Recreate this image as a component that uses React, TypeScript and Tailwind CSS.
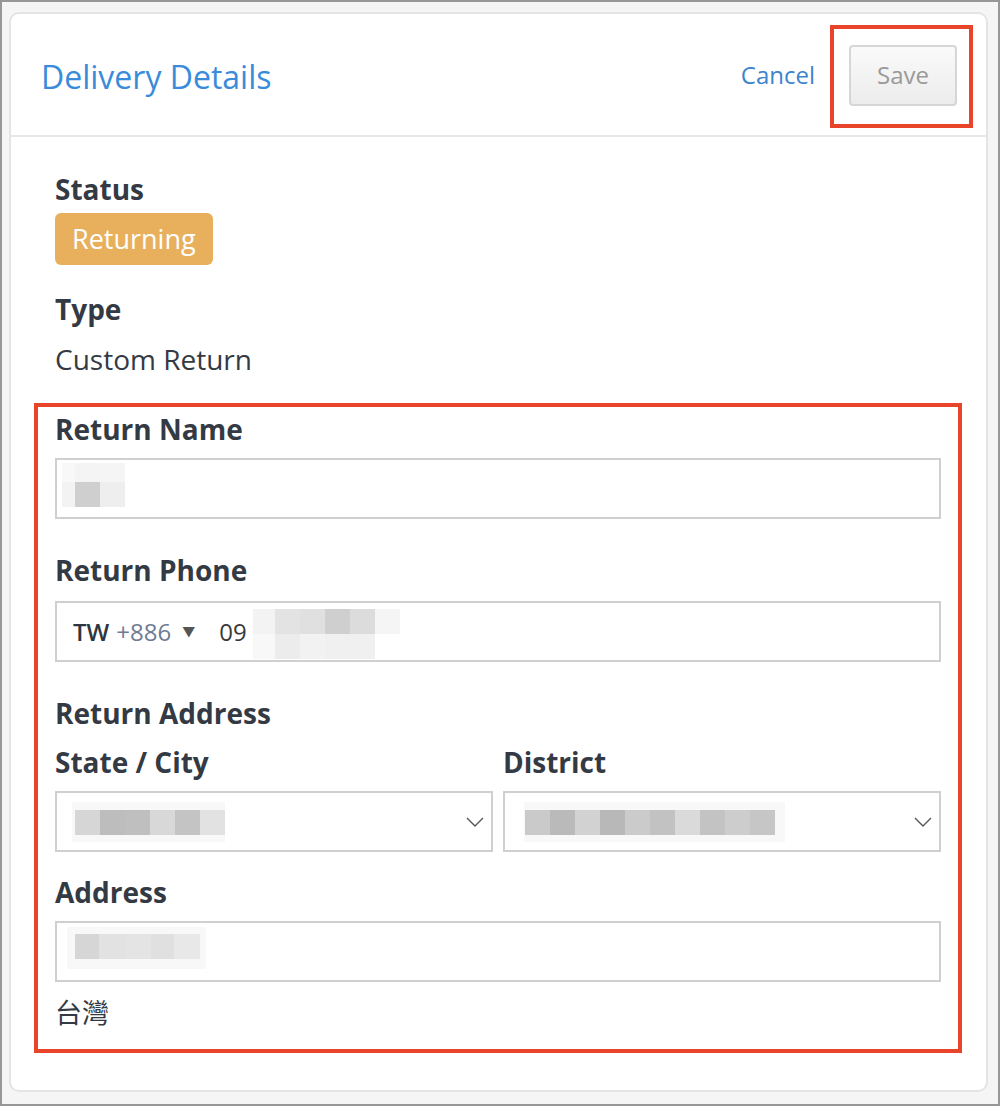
type Cell = [number, string]

function Mosaic({ rows, h }: { rows: Cell[][]; h: number[] }) {
  return (
    <div className="flex flex-col">
      {rows.map((row, i) => (
        <div key={i} className="flex" style={{ height: h[i] }}>
          {row.map(([w, c], j) => (
            <div key={j} style={{ width: w, backgroundColor: c }} />
          ))}
        </div>
      ))}
    </div>
  )
}

function Label({ children }: { children: React.ReactNode }) {
  return <div className="text-[28px] leading-[36px] font-bold text-[#343a44]">{children}</div>
}

function Chevron() {
  return (
    <svg width="18" height="10" viewBox="0 0 18 10" className="shrink-0">
      <polyline points="1,1 9,9 17,1" fill="none" stroke="#555" strokeWidth="1.4" />
    </svg>
  )
}

export default function App() {
  return (
    <div className="w-[1000px] h-[1106px] border-2 border-[#979797] bg-[#f5f5f5] pt-[10px] pl-[7px] pr-[10px] font-['Open_Sans','Noto_Sans_CJK_TC',sans-serif]">
      <div className="h-[1080px] bg-white border-2 border-[#e4e4e4] rounded-[10px] flex flex-col">
        {/* header */}
        <div className="h-[123px] flex items-center pl-[30px] pr-[13px] border-b-2 border-[#e6e6e6]">
          <h1 className="text-[32px] text-[#3b8bdb] flex-1 mt-[4px]">Delivery Details</h1>
          <button className="text-[24px] text-[#3d84cd] mr-[15px]">Cancel</button>
          <div className="border-4 border-[#e8442a] pt-[16px] pb-[18px] pl-[15px] pr-[12px] mt-[3px]">
            <button className="w-[108px] h-[61px] rounded-[4px] border-2 border-[#d6d6d6] bg-gradient-to-b from-[#fafafa] to-[#ececec] text-[24px] text-[#9a9a9a]">
              Save
            </button>
          </div>
        </div>

        {/* body */}
        <div className="pt-[34px] pl-[44px] pr-[45px] text-[#343a44]">
          <Label>Status</Label>
          <div className="mt-[6px] inline-flex h-[52px] items-center px-[17px] rounded-[6px] bg-[#e8b05d] text-white text-[27px]">
            Returning
          </div>
          <div className="mt-[26px]">
            <Label>Type</Label>
          </div>
          <div className="mt-[14px] text-[28px] leading-[36px]">Custom Return</div>

          <div className="mt-[26px] -mx-[21px] border-4 border-[#e8442a] pt-[4px] pb-[18px] px-[17px]">
            <Label>Return Name</Label>
            <div className="mt-[11px] h-[61px] border-2 border-[#cfcfcf] flex items-start pt-[3px] pl-[5px]">
              <Mosaic
                h={[19, 25]}
                rows={[
                  [[13, "#f8f8f8"], [25, "#f4f4f4"], [25, "#f5f5f5"]],
                  [[13, "#f3f3f3"], [25, "#cfcfcf"], [25, "#eeeeee"]],
                ]}
              />
            </div>

            <div className="mt-[33px]">
              <Label>Return Phone</Label>
            </div>
            <div className="mt-[13px] h-[61px] border-2 border-[#cfcfcf] flex items-center pl-[16px] text-[24px]">
              <span className="text-[#2f3540] font-semibold">TW</span>
              <span className="ml-[7px] text-[#6e7b93]">+886</span>
              <span className="ml-[11px] text-[#555] text-[13px]">▼</span>
              <span className="ml-[24px] text-[#3a3a3a]">09</span>
              <div className="ml-[6px] mt-[4px]">
                <Mosaic
                  h={[25, 25]}
                  rows={[
                    [[22, "#f3f3f3"], [25, "#e3e3e3"], [25, "#e0e0e0"], [25, "#cfcfcf"], [25, "#dcdcdc"], [25, "#f5f5f5"]],
                    [[22, "#f8f8f8"], [25, "#ececec"], [25, "#f2f2f2"], [25, "#f0f0f0"], [25, "#f0f0f0"], [25, "#ffffff"]],
                  ]}
                />
              </div>
            </div>

            <div className="mt-[33px]">
              <Label>Return Address</Label>
            </div>
            <div className="mt-[13px] grid grid-cols-2 gap-[10px]">
              <div>
                <Label>State / City</Label>
                <div className="mt-[11px] h-[61px] border-2 border-[#cfcfcf] flex items-center pl-[15px] pr-[7px]">
                  <div className="bg-[#f8f8f8] pl-[3px] pt-[8px] pb-[7px]">
                    <Mosaic
                      h={[25]}
                      rows={[[[25, "#d6d6d6"], [25, "#bdbdbd"], [25, "#bfbfbf"], [25, "#d8d8d8"], [25, "#c4c4c4"], [25, "#e2e2e2"]]]}
                    />
                  </div>
                  <div className="flex-1" />
                  <Chevron />
                </div>
              </div>
              <div>
                <Label>District</Label>
                <div className="mt-[11px] h-[61px] border-2 border-[#cfcfcf] flex items-center pl-[19px] pr-[7px]">
                  <div className="bg-[#f8f8f8] pl-[1px] pr-[10px] pt-[8px] pb-[7px]">
                    <Mosaic
                      h={[25]}
                      rows={[[
                        [25, "#cacaca"], [25, "#bababa"], [25, "#d2d2d2"], [25, "#b8b8b8"], [25, "#cbcbcb"],
                        [25, "#c2c2c2"], [25, "#dadada"], [25, "#c3c3c3"], [25, "#cdcdcd"], [25, "#c6c6c6"],
                      ]]}
                    />
                  </div>
                  <div className="flex-1" />
                  <Chevron />
                </div>
              </div>
            </div>

            <div className="mt-[22px]">
              <Label>Address</Label>
            </div>
            <div className="mt-[11px] h-[61px] border-2 border-[#cfcfcf] flex items-center pl-[10px]">
              <div className="bg-[#f8f8f8] pl-[8px] pr-[6px] pt-[7px] pb-[10px] mb-[8px]">
                <Mosaic
                  h={[25]}
                  rows={[[[24, "#d6d6d6"], [26, "#e2e2e2"], [26, "#e4e4e4"], [23, "#e0e0e0"], [26, "#e8e8e8"]]]}
                />
              </div>
            </div>

            <div className="mt-[13px] text-[27px] leading-[36px] text-[#343a44]">台灣</div>
          </div>
        </div>
      </div>
    </div>
  )
}
